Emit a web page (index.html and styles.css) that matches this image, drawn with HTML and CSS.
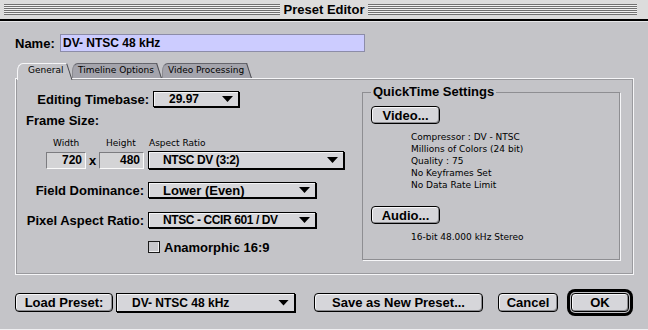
FILE: index.html
```html
<!DOCTYPE html>
<html><head><title>Preset Editor</title>
<meta http-equiv="content-type" content="text/html; charset=UTF-8">
<link rel="stylesheet" href="styles.css">
</head>
<body>
<div class="titlebar"><span class="stripes left"></span><span class="title">Preset Editor</span><span class="stripes right"></span></div>
<form class="dialog" action="" onsubmit="return false;">
<div class="name_row"><label>Name:</label><div class="name_box">DV- NTSC 48 kHz</div></div>
<div class="tabs">
	<div class="tab active">General</div>
	<div class="tab">Timeline Options</div>
	<div class="tab">Video Processing</div>
</div>
<div class="panel">
	<div class="general">
		<div class="timebase_row"><label>Editing Timebase:</label><div class="popup timebase"><span>29.97</span><i class="arrow"></i></div></div>
		<div class="frame_title">Frame Size:</div>
		<div class="captions"><span class="c_width">Width</span><span class="c_height">Height</span><span>Aspect Ratio</span></div>
		<div class="size_row">
			<div class="field f_width">720</div><span class="times">x</span><div class="field f_height">480</div>
			<div class="popup aspect"><span class="tight">NTSC DV (3:2)</span><i class="arrow"></i></div>
		</div>
		<div class="control_row first"><label>Field Dominance:</label><div class="popup"><span>Lower (Even)</span><i class="arrow"></i></div></div>
		<div class="control_row"><label>Pixel Aspect Ratio:</label><div class="popup"><span class="tight">NTSC - CCIR 601 / DV</span><i class="arrow"></i></div></div>
		<div class="check_row"><span class="checkbox"></span>Anamorphic 16:9</div>
	</div>
	<fieldset class="qt_group">
		<legend>QuickTime Settings</legend>
		<button class="btn small">Video...</button>
		<div class="info">Compressor : DV - NTSC<br>Millions of Colors (24 bit)<br>Quality : 75<br>No Keyframes Set<br>No Data Rate Limit</div>
		<button class="btn small audio">Audio...</button>
		<div class="info">16-bit 48.000 kHz Stereo</div>
	</fieldset>
</div>
<div class="footer">
	<button class="btn load">Load Preset:</button>
	<div class="popup preset"><span>DV- NTSC 48 kHz</span><i class="arrow"></i></div>
	<button class="btn save">Save as New Preset...</button>
	<button class="btn cancel">Cancel</button>
	<button class="btn ok">OK</button>
</div>
</form>
</body></html>
```

FILE: styles.css
```css
body{margin:0;width:648px;height:330px;overflow:hidden;background:#c4c4c8;font-family:"Liberation Sans",Arial,sans-serif;font-size:13px;font-weight:bold;color:#000;}
.titlebar{display:grid;grid-template-columns:1fr auto 1fr;align-items:center;height:19px;background:#dcdcdc;border-bottom:2px solid #000;}
.stripes{height:11px;background:repeating-linear-gradient(to bottom,#707070 0 1px,#f0f0f0 1px 2px);}
.stripes.left{margin-left:4px;}
.stripes.right{margin-right:11px;}
.title{padding:0 4px;line-height:19px;}
.dialog{margin:0;padding:0 0 0 15px;height:307px;border-top:1px solid #e6e6e8;border-bottom:1px solid #f0f0f2;}

.name_row{display:flex;align-items:center;margin-top:12px;}
.name_row label{width:45px;}
.name_box{width:305px;height:18px;box-sizing:border-box;padding-left:2px;background:#ccccff;border:1px solid #8c8ca8;font-size:12px;line-height:16px;}

.tabs{display:flex;height:15px;margin:11px 0 0 2px;position:relative;z-index:2;font:9px/15px "DejaVu Sans",sans-serif;}
.tab{position:relative;box-sizing:border-box;width:90px;padding-left:6px;white-space:nowrap;}
.tab:nth-child(1){width:55px;padding-left:11px;z-index:3;}
.tab:nth-child(2){z-index:2;}
.tab:nth-child(3){z-index:1;}
.tab::before,.tab::after{content:"";position:absolute;top:0;bottom:0;z-index:-1;background:#a4a4ac;border-top:1px solid #65656c;}
.tab::before{left:0;right:12px;border-left:1px solid #8a8a90;border-top-left-radius:6px 8px;}
.tab::after{right:5px;width:14px;border-right:1px solid #4a4a50;transform:skewX(18deg);transform-origin:top;}
.tab.active{height:17px;}
.tab.active::before,.tab.active::after{background:#c4c4c8;border-top-color:#f6f6f8;}
.tab.active::before{border-left-color:#f6f6f8;}

.panel{display:flex;width:619px;height:197px;box-sizing:border-box;border:1px solid #f6f6f8;box-shadow:inset 0 0 0 1px #9a9a9e;}
.general{width:346px;flex:none;padding-top:12px;}

.popup{display:flex;align-items:center;box-sizing:border-box;height:16px;padding:0 5px 0 14px;background:#d6d6da;border:1px solid #000;box-shadow:1px 1px 0 #000,inset 1px 1px 0 #f4f4f6;white-space:nowrap;}
.popup span{flex:1;}
.popup .tight{font-size:12px;letter-spacing:-0.4px;}
.arrow{width:11px;height:6px;background:#000;clip-path:polygon(0 0,100% 0,50% 100%);}

.timebase_row{display:flex;align-items:center;}
.timebase_row label{width:133px;text-align:right;margin-right:4px;}
.popup.timebase{width:86px;padding-left:15px;font-size:12px;}
.frame_title{margin:7px 0 0 10px;line-height:14px;}
.captions{display:flex;margin-top:10px;padding-left:37px;font:9px/11px "DejaVu Sans",sans-serif;}
.captions .c_width{width:53px;}
.captions .c_height{width:43px;}
.size_row{display:flex;align-items:center;height:18px;margin-top:2px;padding-left:30px;}
.field{box-sizing:border-box;height:17px;padding-right:3px;background:#d4d4d6;border:1px solid;border-color:#7c7c80 #fafafa #fafafa #7c7c80;font-size:12px;line-height:15px;text-align:right;}
.f_width{width:40px;}
.f_height{width:45px;}
.times{width:13px;text-align:center;line-height:18px;padding-top:2px;}
.popup.aspect{width:196px;height:18px;margin-left:4px;}
.control_row{display:flex;align-items:center;margin-top:14px;}
.control_row.first{margin-top:13px;}
.control_row label{width:128px;text-align:right;margin-right:4px;}
.control_row .popup{width:168px;}
.check_row{display:flex;align-items:center;height:12px;margin:13px 0 0 132px;}
.checkbox{width:12px;height:12px;box-sizing:border-box;margin-right:4px;border:1px solid #1a1a1a;background:#c8c8cc;box-shadow:inset -1px -1px 0 #f0f0f2;}

.qt_group{box-sizing:border-box;width:258px;height:175px;min-width:0;margin:6px 0 0 0;padding:7px 0 0 8px;border:1px solid #8e8e92;box-shadow:1px 1px 0 #f6f6f8;}
.qt_group legend{padding:0 2px;line-height:14px;}
.info{margin:7px 0 0 40px;font:9px/12px "DejaVu Sans",sans-serif;white-space:nowrap;}

.btn{box-sizing:border-box;height:19px;padding:0;background:#d6d6da;border:1px solid #000;border-radius:4px;box-shadow:inset 1px 1px 0 #f6f6f8,inset -1px -1px 0 #8c8c90;font:inherit;color:#000;text-align:center;white-space:nowrap;}
.btn.small{display:block;width:69px;height:18px;}
.btn.audio{margin-top:15px;}

.footer{display:flex;align-items:center;margin-top:18px;}
.btn.load{width:98px;margin-right:3px;}
.popup.preset{width:179px;height:19px;padding-left:15px;font-size:12px;}
.btn.save{width:169px;margin-left:19px;}
.btn.cancel{width:60px;margin-left:15px;}
.btn.ok{width:58px;margin-left:13px;box-shadow:inset 1px 1px 0 #f6f6f8,inset -1px -1px 0 #8c8c90,0 0 0 1px #c4c4c8,0 0 0 4px #000;}
```
